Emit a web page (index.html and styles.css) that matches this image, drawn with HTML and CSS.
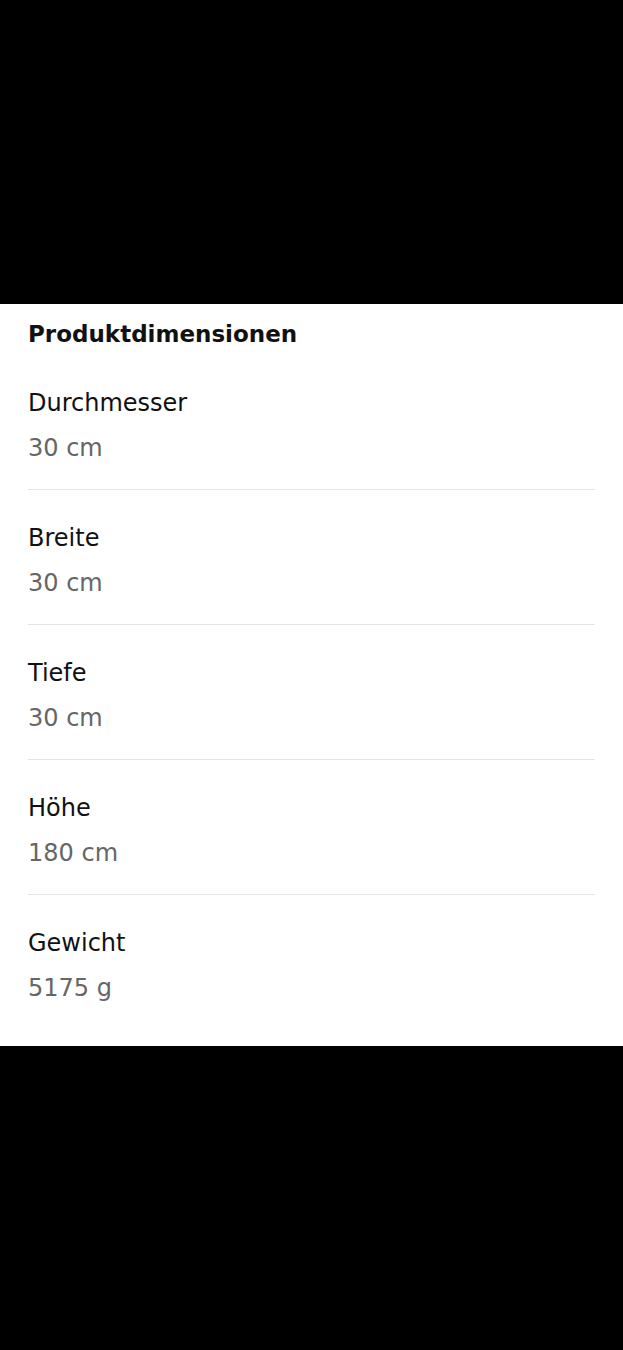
FILE: index.html
```html
<!DOCTYPE html>
<html lang="de">
<head>
    <meta charset="UTF-8">
    <meta name="viewport" content="width=device-width, initial-scale=1.0">
    <title>Produktdimensionen</title>
    <link rel="stylesheet" href="styles.css">
</head>
<body>
    <div class="sheet">
        <h2 class="title">Produktdimensionen</h2>
        <ul class="dims">
            <li class="dim">
                <div class="label">Durchmesser</div>
                <div class="value">30 cm</div>
            </li>
            <li class="dim">
                <div class="label">Breite</div>
                <div class="value">30 cm</div>
            </li>
            <li class="dim">
                <div class="label">Tiefe</div>
                <div class="value">30 cm</div>
            </li>
            <li class="dim">
                <div class="label">Höhe</div>
                <div class="value">180 cm</div>
            </li>
            <li class="dim">
                <div class="label">Gewicht</div>
                <div class="value">5175 g</div>
            </li>
        </ul>
    </div>
</body>
</html>
```

FILE: styles.css
```css
* {
    box-sizing: border-box;
    margin: 0;
    padding: 0;
}

body {
    background-color: #000;
    font-family: 'DejaVu Sans', sans-serif;
    height: 1350px;
}

.sheet {
    margin-top: 304px;
    background: #fff;
    padding: 14px 28px 17px;
}

.title {
    font-size: 23px;
    line-height: 32px;
    font-weight: 700;
    color: #111;
    margin-bottom: 5px;
}

.dims {
    list-style: none;
}

.dim {
    padding: 33px 0 26px;
    border-bottom: 1px solid #e5e5e5;
    display: flex;
    flex-direction: column;
    gap: 15px;
}

.dim:last-child {
    border-bottom: none;
}

.label {
    font-size: 24px;
    line-height: 30px;
    color: #111;
}

.value {
    font-size: 24px;
    line-height: 30px;
    color: #666;
}
```
